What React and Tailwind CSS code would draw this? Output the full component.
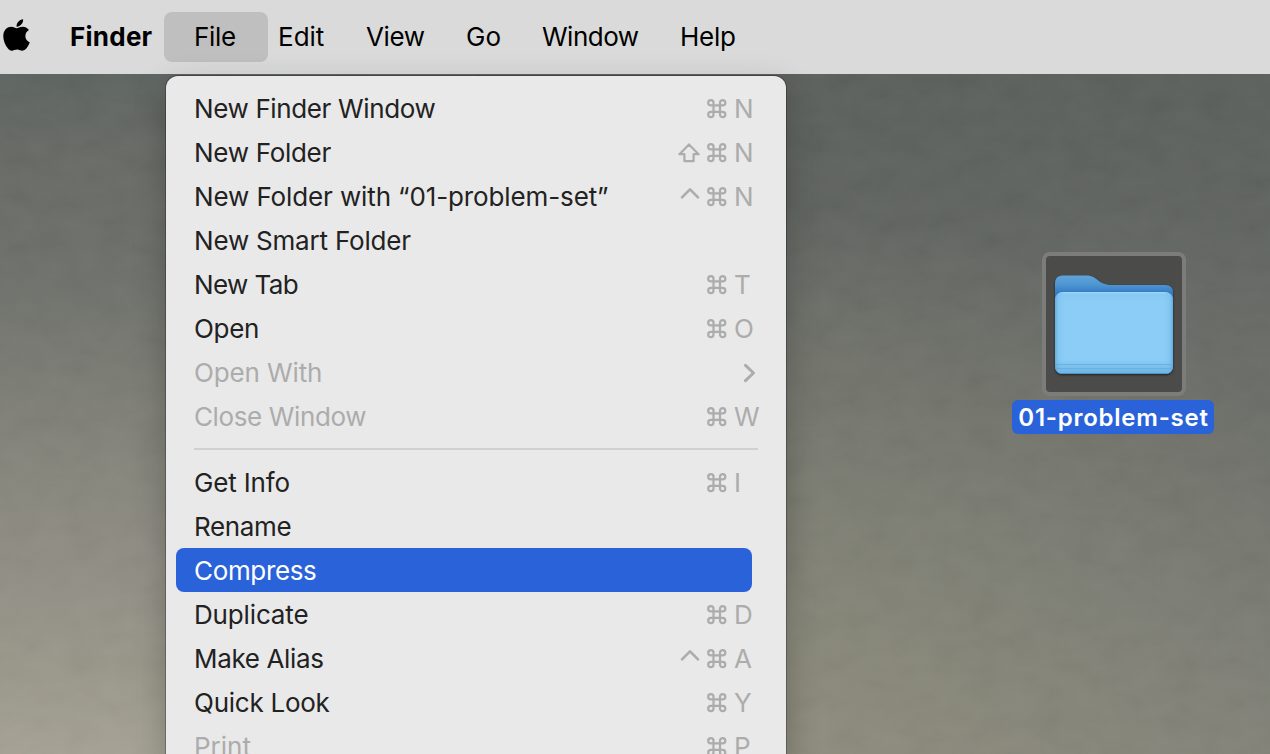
import { FaApple } from "react-icons/fa";

const menus = [
  { label: "Edit", cls: "w-[88px]" },
  { label: "View", cls: "w-[100px] tracking-[-0.4px]" },
  { label: "Go", cls: "w-[76px]" },
  { label: "Window", cls: "w-[138px] tracking-[-0.5px]" },
  { label: "Help", cls: "w-[90px] tracking-[-0.3px]" },
];

const items = [
  { label: "New Finder Window", key: "N", track: "tracking-[-0.37px]" },
  { label: "New Folder", key: "N", mod: "shift", track: "tracking-[-0.3px]" },
  { label: "New Folder with “01-problem-set”", key: "N", mod: "ctrl", track: "tracking-[-0.12px]" },
  { label: "New Smart Folder", track: "tracking-[-0.2px]" },
  { label: "New Tab", key: "T", track: "tracking-[-0.6px]" },
  { label: "Open", key: "O", track: "tracking-[-0.3px]" },
  { label: "Open With", disabled: true, submenu: true, track: "tracking-[-0.12px]" },
  { label: "Close Window", key: "W", disabled: true, track: "tracking-[-0.37px]" },
  { separator: true },
  { label: "Get Info", key: "I", track: "tracking-[-0.15px]" },
  { label: "Rename", track: "tracking-[-0.35px]" },
  { label: "Compress", active: true, track: "tracking-[-0.35px]" },
  { label: "Duplicate", key: "D", track: "tracking-[-0.15px]" },
  { label: "Make Alias", key: "A", mod: "ctrl", track: "tracking-[-0.35px]" },
  { label: "Quick Look", key: "Y", track: "tracking-[-0.25px]" },
  { label: "Print", key: "P", disabled: true, track: "" },
];

function CommandIcon() {
  return (
    <svg className="ml-[7px] h-5 w-5" viewBox="0 0 20 20" fill="none" stroke="currentColor" strokeWidth="2.2">
      <path d="M6.5 13V3.75A2.65 2.65 0 1 0 3.85 6.4H15.65A2.65 2.65 0 1 0 13 3.75V15.55A2.65 2.65 0 1 0 15.65 12.9H3.85A2.65 2.65 0 1 0 6.5 15.55V12.5" />
    </svg>
  );
}

function ShiftIcon() {
  return (
    <svg className="h-5 w-[22px]" viewBox="0 0 22 20" fill="none" stroke="currentColor" strokeWidth="2.2" strokeLinejoin="round">
      <path d="M11 1.4L20.6 11.2H15.6V18.2H6.4V11.2H1.4Z" />
    </svg>
  );
}

function ControlIcon() {
  return (
    <svg className="h-5 w-[22px]" viewBox="0 0 22 20" fill="none" stroke="currentColor" strokeWidth="2.6" strokeLinecap="round" strokeLinejoin="round">
      <path d="M4 10.3L12 2.3L20 10.3" />
    </svg>
  );
}

function Row({ item }) {
  if (item.separator) {
    return <div className="mr-[28px] ml-[28px] flex h-[22px] items-center"><div className="h-[2px] w-full bg-[#d0d0d0]" /></div>;
  }
  const tone = item.active
    ? "w-[576px] rounded-[8px] bg-[#2962d9] text-white"
    : item.disabled
      ? "w-[600px] text-[#acacac]"
      : "w-[600px] text-[#222222]";
  return (
    <div className={`ml-[10px] flex h-11 items-center justify-between pl-[18px] ${tone}`}>
      <span className={`pt-[2px] whitespace-nowrap ${item.track}`}>{item.label}</span>
      {item.key && (
        <span className="flex items-center pt-[2px] text-[#acacac]">
          {item.mod === "shift" && <ShiftIcon />}
          {item.mod === "ctrl" && <ControlIcon />}
          <CommandIcon />
          <span className="ml-[7px] w-[42px]">{item.key}</span>
        </span>
      )}
      {item.submenu && (
        <svg className="mt-px mr-[19px] h-5 w-[15px]" viewBox="0 0 15 20" fill="none" stroke="currentColor" strokeWidth="3" strokeLinecap="round" strokeLinejoin="round">
          <path d="M3.5 2.4L11.5 10L3.5 17.6" />
        </svg>
      )}
    </div>
  );
}

function Folder() {
  return (
    <svg className="h-[136px] w-[136px]" viewBox="0 0 136 136">
      <defs>
        <linearGradient id="back" x1="0" y1="0" x2="0" y2="1">
          <stop offset="0" stopColor="#5fa3d8" />
          <stop offset="0.09" stopColor="#4f97d3" />
          <stop offset="0.18" stopColor="#3479c3" />
          <stop offset="1" stopColor="#3479c3" />
        </linearGradient>
        <linearGradient id="side" x1="0" y1="0" x2="1" y2="0">
          <stop offset="0" stopColor="#4e9ad0" stopOpacity="0.65" />
          <stop offset="0.03" stopColor="#6cb5e6" stopOpacity="0.3" />
          <stop offset="0.1" stopColor="#8bcdf7" stopOpacity="0" />
          <stop offset="0.9" stopColor="#8bcdf7" stopOpacity="0" />
          <stop offset="0.97" stopColor="#6cb5e6" stopOpacity="0.3" />
          <stop offset="1" stopColor="#4e9ad0" stopOpacity="0.65" />
        </linearGradient>
        <linearGradient id="front" x1="0" y1="0" x2="0" y2="1">
          <stop offset="0" stopColor="#a2dbfb" />
          <stop offset="0.025" stopColor="#87c9f4" />
          <stop offset="0.12" stopColor="#8bcdf7" />
          <stop offset="0.83" stopColor="#8bcdf7" />
          <stop offset="1" stopColor="#6bb3e3" />
        </linearGradient>
        <filter id="drop" x="-10%" y="-10%" width="120%" height="125%">
          <feDropShadow dx="0" dy="1" stdDeviation="1" floodColor="#000" floodOpacity="0.55" />
        </filter>
      </defs>
      <g filter="url(#drop)">
        <path d="M9 27.5Q9 19.5 17 19.5H41C51 19.5 52 29 65 29H119Q127 29 127 37V110Q127 118 119 118H17Q9 118 9 110Z" fill="url(#back)" />
        <rect x="9" y="36" width="118" height="82" rx="8" fill="url(#front)" />
        <rect x="9" y="36" width="118" height="82" rx="8" fill="url(#side)" />
        <path d="M9.5 108.5H126.5M9.5 112.5H126.5" stroke="#64abda" strokeWidth="1" opacity="0.7" />
        <path d="M14 117.5H122" stroke="#4e94c5" strokeWidth="1" />
      </g>
    </svg>
  );
}

function Grain() {
  return (
    <svg className="absolute inset-0 h-full w-full opacity-[0.04]">
      <filter id="grain">
        <feTurbulence type="fractalNoise" baseFrequency="0.03 0.05" numOctaves="5" seed="4" />
        <feColorMatrix type="matrix" values="1 0 0 0 0  1 0 0 0 0  1 0 0 0 0  0 0 0 0 1" />
      </filter>
      <rect width="100%" height="100%" filter="url(#grain)" />
    </svg>
  );
}

export default function App() {
  return (
    <div className="relative flex h-[754px] w-[1270px] flex-col overflow-hidden font-['Inter',sans-serif] text-[26px] leading-none">
      <header className="flex h-[74px] shrink-0 items-center bg-[#dadada] text-black">
        <FaApple className="mr-[40px] mb-[4px] ml-[3px] h-[36px] w-[27px]" />
        <span className="w-[94px] font-bold tracking-[0.25px]">Finder</span>
        <span className="flex h-[50px] w-[104px] items-center rounded-[8px] bg-[#bfbfbf] pl-[30px] tracking-[-0.3px]">File</span>
        <nav className="ml-[10px] flex">
          {menus.map((m) => (
            <span key={m.label} className={m.cls}>{m.label}</span>
          ))}
        </nav>
      </header>

      <main className="relative flex flex-1">
        <div className="w-[476px] bg-[linear-gradient(180deg,#5c635f_0%,#676964_12%,#6d706a_30%,#7a7b73_45%,#87867c_60%,#918f85_75%,#9a978a_88%,#a5a294_100%)]" />
        <div className="flex-1 bg-[radial-gradient(ellipse_720px_560px_at_230px_680px,rgba(168,164,136,0.42),transparent),linear-gradient(180deg,#5a5f5b_0%,#5f635f_20%,#676a65_38%,#6d6f69_55%,#74766f_75%,#7e7e76_100%)]" />
        <Grain />
      </main>

      <section className="absolute top-[76px] left-[166px] w-[620px] rounded-[12px] bg-[#e9e9e9] pt-[10px] pb-[10px] shadow-[0_0_0_1px_rgba(0,0,0,0.25),0_12px_34px_rgba(0,0,0,0.24)]">
        {items.map((item, i) => (
          <Row key={i} item={item} />
        ))}
      </section>

      <figure className="absolute top-[252px] left-[1012px] flex w-[202px] flex-col items-center">
        <div className="ml-[2px] h-[144px] w-[144px] rounded-[8px] border-4 border-[#7c7d7a] bg-[#4b4c49]">
          <Folder />
        </div>
        <figcaption className="mt-1 flex h-[34px] w-full items-center justify-center rounded-[6px] bg-[#2962d9] pt-px pl-[1px] text-[24px] font-semibold tracking-[0.75px] whitespace-nowrap text-white">
          01-problem-set
        </figcaption>
      </figure>
    </div>
  );
}
